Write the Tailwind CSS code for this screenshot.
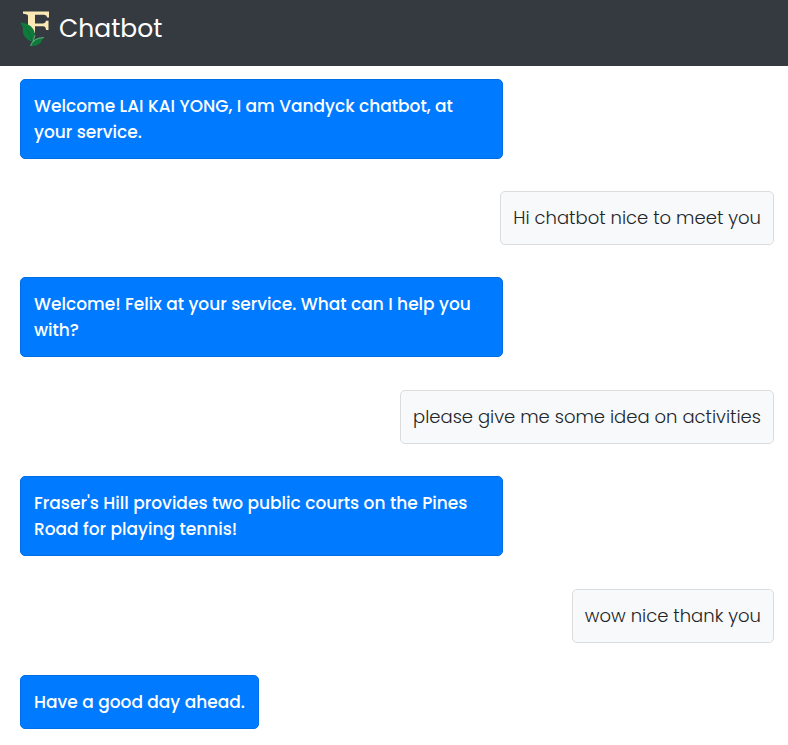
<!DOCTYPE html>
<html lang="en">
<head>
<meta charset="utf-8">
<meta name="viewport" content="width=device-width, initial-scale=1">
<title>Chatbot</title>
<script src="https://cdn.jsdelivr.net/npm/@tailwindcss/browser@4"></script>
</head>
<body class="bg-white font-[Poppins,Inter,sans-serif] text-[18px] leading-[26px] text-[#212529]">
<header class="flex h-[66px] items-start gap-[7px] bg-[#343a40] px-5 pt-[8px] text-white">
  <svg class="h-[40px] w-[32px] shrink-0" viewBox="0 0 32 40" role="img" aria-label="Vandyck logo">
    <path fill="#fbe8b4" d="M3 3.500H29V9.500H27.200Q26.800 7 24 6.800H15V15.500H23Q25.600 15.300 26 12.800H28.500V22H26Q26 18.600 23 18.300H15V25H8V8Q8 6 3 5.800Z"/>
    <path fill="#107a3d" d="M0 14.500C7 15 12 18 14 22.500C16 28 14 31 12.500 34C5 31 2 26 3 21C3 18 1 16 0 14.500Z"/>
    <path fill="#107a3d" d="M24 29.500C17 29 12 31 10 38C17 38 21 36 22 32Z"/>
    <path fill="none" stroke="#0a6a33" stroke-width=".8" d="M3 17Q10 23 12 33"/>
    <path fill="none" stroke="#9fc5a9" stroke-width=".6" d="M24 29.500Q13 30 10.500 38M15 27L13 34"/>
  </svg>
  <h1 class="text-[25px] leading-[42px]">Chatbot</h1>
</header>
<main class="flex flex-col items-start pt-[13px] pr-[14px] pb-4 pl-5">
  <p class="mb-[32px] w-[64%] rounded-[5px] border border-[#006fe6] bg-[#007bff] p-[13px] text-[17px] leading-[26px] font-medium text-white">Welcome LAI KAI YONG, I am Vandyck chatbot, at your service.</p>
  <p class="mb-[32px] self-end rounded-[5px] border border-[#dadcde] bg-[#f8f9fa] px-[12px] py-[13px] font-light">Hi chatbot nice to meet you</p>
  <p class="mb-[33px] w-[64%] rounded-[5px] border border-[#006fe6] bg-[#007bff] p-[13px] text-[17px] leading-[26px] font-medium text-white">Welcome! Felix at your service. What can I help you with?</p>
  <p class="mb-[32px] self-end rounded-[5px] border border-[#dadcde] bg-[#f8f9fa] px-[12px] py-[13px] font-light">please give me some idea on activities</p>
  <p class="mb-[33px] w-[64%] rounded-[5px] border border-[#006fe6] bg-[#007bff] p-[13px] text-[17px] leading-[26px] font-medium text-white">Fraser's Hill provides two public courts on the Pines Road for playing tennis!</p>
  <p class="mb-[32px] self-end rounded-[5px] border border-[#dadcde] bg-[#f8f9fa] px-[12px] py-[13px] font-light">wow nice thank you</p>
  <p class="max-w-[64%] rounded-[5px] border border-[#006fe6] bg-[#007bff] p-[13px] text-[17px] leading-[26px] font-medium text-white">Have a good day ahead.</p>
</main>
</body>
</html>
